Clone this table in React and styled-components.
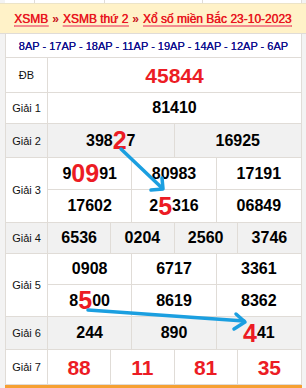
import styled, { createGlobalStyle } from 'styled-components';

const GlobalStyle = createGlobalStyle`
    html, body {
        margin: 0;
        padding: 0;
        background: #ffffff;
    }
    body {
        font-family: "Liberation Sans", Arial, sans-serif;
    }
`;

const LINE = '#e0dcd7';
const RED = '#ec1c24';

const Page = styled.div`
    position: relative;
    width: 306px;
    height: 388px;
    overflow: hidden;
    background: #f3f3f3;
`;

const TopStrip = styled.div`
    display: grid;
    grid-template-columns: 30px 70px 98px 1fr;
    height: 3px;
    margin: 0 4px 0 5px;
    background: #ffffff;
    & > div {
        border-right: 1px solid ${LINE};
    }
`;

const Header = styled.div`
    display: flex;
    align-items: center;
    justify-content: center;
    height: 29px;
    background: #fff2c8;
    border-top: 1px solid #ece4c8;
    border-bottom: 1px solid ${LINE};
    font-size: 12px;
    color: #e8161f;
`;

const Crumb = styled.span`
    text-decoration: underline;
    text-decoration-color: #f38a8e;
    text-decoration-thickness: 2px;
    text-underline-offset: 2px;
    text-shadow: 0 0 0.6px #e8161f, 0 0 1px rgba(236, 28, 36, 0.4);
`;

const Sep = styled.span`
    margin: 0 4px;
    font-weight: bold;
    color: #c8141c;
`;

const SubRow = styled.div`
    display: flex;
    align-items: center;
    justify-content: center;
    height: 23px;
    margin: 0 4px 0 5px;
    background: #ffffff;
    border-bottom: 1px solid ${LINE};
    border-left: 1px solid ${LINE};
    border-right: 1px solid ${LINE};
    font-size: 11px;
    color: #0f0f8c;
    text-shadow: 0 0 0.4px #0f0f8c;
`;

const Table = styled.div`
    margin: 0 4px 0 5px;
    border-left: 1px solid ${LINE};
    border-right: 1px solid ${LINE};
`;

const Row = styled.div`
    display: grid;
    grid-template-columns: 42px 1fr;
    height: ${p => p.$h}px;
    background: ${p => (p.$gray ? '#f1f1f1' : '#ffffff')};
    border-bottom: 1px solid ${LINE};
    box-sizing: border-box;
`;

const Label = styled.div`
    display: flex;
    align-items: center;
    justify-content: center;
    border-right: 1px solid ${LINE};
    font-size: 11px;
    color: #111;
`;

const Cells = styled.div`
    display: grid;
    grid-template-columns: repeat(${p => p.$cols}, 1fr);
    grid-template-rows: repeat(${p => p.$rows || 1}, 1fr);
`;

const Cell = styled.div`
    display: flex;
    align-items: center;
    justify-content: center;
    border-right: ${p => (p.$last ? 'none' : `1px solid ${LINE}`)};
    border-bottom: ${p => (p.$bottom ? `1px solid ${LINE}` : 'none')};
    font-size: ${p => (p.$size || 16)}px;
    font-weight: bold;
    color: ${p => (p.$red ? RED : '#000')};
    line-height: 1;
`;

const Hi = styled.span`
    font-size: 25px;
    color: ${RED};
`;

const BottomBar = styled.div`
    height: 5px;
    margin: 0 4px 0 5px;
    background: #f6a032;
`;

const Arrows = styled.svg`
    position: absolute;
    left: 0;
    top: 0;
    pointer-events: none;
`;

const NumCells = ({ items, cols, rows = 1, size, red }) => (
    <Cells $cols={cols} $rows={rows}>
        {items.map((it, i) => (
            <Cell
                key={i}
                $last={(i + 1) % cols === 0}
                $bottom={rows > 1 && i < cols}
                $size={size}
                $red={red}
            >
                {it}
            </Cell>
        ))}
    </Cells>
);

const App = () => {
    return (
        <Page>
            <GlobalStyle />
            <TopStrip>
                <div />
                <div />
                <div />
                <div />
            </TopStrip>
            <Header>
                <Crumb>XSMB</Crumb>
                <Sep>»</Sep>
                <Crumb>XSMB thứ 2</Crumb>
                <Sep>»</Sep>
                <Crumb>Xổ số miền Bắc 23-10-2023</Crumb>
            </Header>
            <SubRow>8AP - 17AP - 18AP - 11AP - 19AP - 14AP - 12AP - 6AP</SubRow>
            <Table>
                <Row $h={35}>
                    <Label>ĐB</Label>
                    <NumCells cols={1} size={21} red items={['45844']} />
                </Row>
                <Row $h={31}>
                    <Label>Giải 1</Label>
                    <NumCells cols={1} items={['81410']} />
                </Row>
                <Row $h={34} $gray>
                    <Label>Giải 2</Label>
                    <NumCells cols={2} items={[<>398<Hi>2</Hi>7</>, '16925']} />
                </Row>
                <Row $h={65}>
                    <Label>Giải 3</Label>
                    <NumCells
                        cols={3}
                        rows={2}
                        items={[
                            <>9<Hi>09</Hi>91</>, '80983', '17191',
                            '17602', <>2<Hi>5</Hi>316</>, '06849',
                        ]}
                    />
                </Row>
                <Row $h={31} $gray>
                    <Label>Giải 4</Label>
                    <NumCells cols={4} items={['6536', '0204', '2560', '3746']} />
                </Row>
                <Row $h={63}>
                    <Label>Giải 5</Label>
                    <NumCells
                        cols={3}
                        rows={2}
                        items={['0908', '6717', '3361', <>8<Hi>5</Hi>00</>, '8619', '8362']}
                    />
                </Row>
                <Row $h={33} $gray>
                    <Label>Giải 6</Label>
                    <NumCells cols={3} items={['244', '890', <><Hi>4</Hi>41</>]} />
                </Row>
                <Row $h={35}>
                    <Label>Giải 7</Label>
                    <NumCells cols={4} size={21} red items={['88', '11', '81', '35']} />
                </Row>
            </Table>
            <BottomBar />
            <Arrows width="306" height="388" viewBox="0 0 306 388">
                <g stroke="#1b9fe0" strokeWidth="3.5" strokeLinecap="round" strokeLinejoin="round" fill="none">
                    <line x1="121" y1="149" x2="162" y2="188" />
                    <polyline points="151,190 163,189 162,178" />
                    <line x1="88" y1="310" x2="244" y2="321" />
                    <polyline points="236,314 245,322 234,329" />
                </g>
            </Arrows>
        </Page>
    );
};

export default App;
